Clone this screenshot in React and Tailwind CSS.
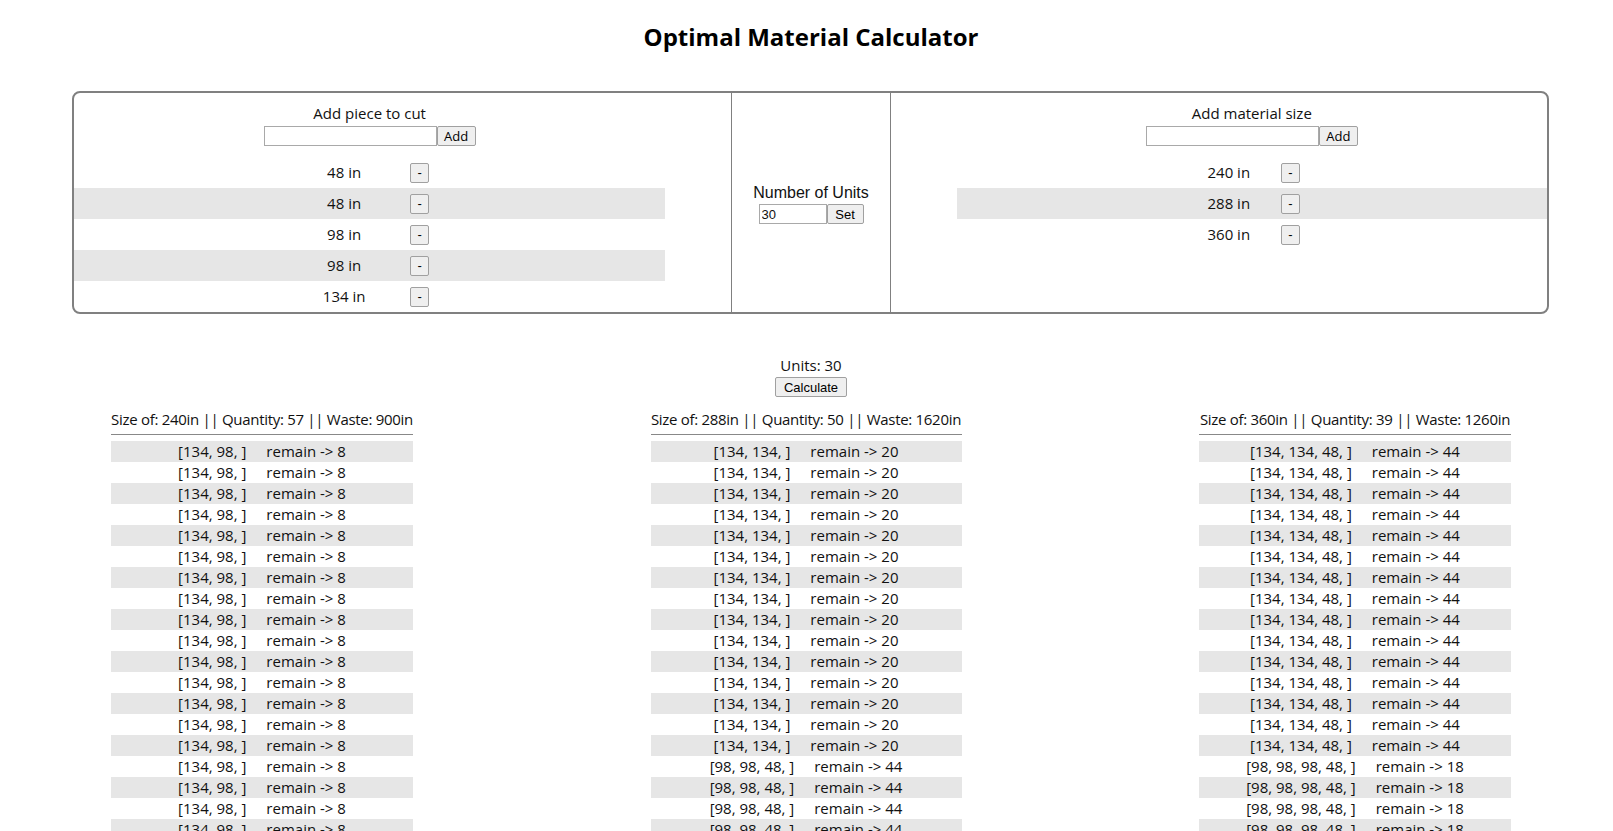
import React, { useState } from 'react';

const pieces = [48, 48, 98, 98, 134];
const materials = [240, 288, 360];

const results = [
  { size: 240, qty: 57, waste: 900, width: 'w-[302px]', groups: [{ cut: '[134, 98, ]', remain: 8, count: 57 }] },
  {
    size: 288, qty: 50, waste: 1620, width: 'w-[311px]',
    groups: [
      { cut: '[134, 134, ]', remain: 20, count: 15 },
      { cut: '[98, 98, 48, ]', remain: 44, count: 35 },
    ],
  },
  {
    size: 360, qty: 39, waste: 1260, width: 'w-[312px]',
    groups: [
      { cut: '[134, 134, 48, ]', remain: 44, count: 15 },
      { cut: '[98, 98, 98, 48, ]', remain: 18, count: 24 },
    ],
  },
];

const btn = 'bg-[#efefef] border border-[#a0a0a0] rounded-[2px] text-[13px] text-black leading-none';

const SizeList = ({ label, items, textWidth, gap }) => (
  <div className="w-[90%]">
    <div className="pt-[10px] text-center leading-[21px]">{label}</div>
    <div className="mt-[2px] flex justify-center">
      <input type="text" className="w-[173px] h-[20px] border border-[#a9a9a9] bg-white px-[2px] text-[13px] outline-none" />
      <button className={`${btn} w-[39px] h-[20px] font-['Open_Sans',sans-serif]`}>Add</button>
    </div>
    <div className="mt-[11px]">
      {items.map((size, idx) => (
        <div
          key={idx}
          className={`h-[31px] flex items-center justify-center ${idx % 2 === 1 ? 'bg-[#e6e6e6]' : ''}`}
        >
          <span className="text-center whitespace-nowrap" style={{ width: textWidth }}>{size} in</span>
          <button className={`${btn} w-[19px] h-[20px] font-['Liberation_Sans',Arial,sans-serif]`} style={{ marginLeft: gap }}>-</button>
        </div>
      ))}
    </div>
  </div>
);

const ResultColumn = ({ result }) => {
  const rows = result.groups.flatMap((g) => Array.from({ length: g.count }, () => g));
  return (
    <div className={result.width}>
      <div className="leading-[21px] pb-[4px] border-b border-[#888] text-center whitespace-nowrap tracking-[-0.3px]">
        Size of: {result.size}in || Quantity: {result.qty} || Waste: {result.waste}in
      </div>
      <div className="mt-[6px]">
        {rows.map((r, idx) => (
          <div
            key={idx}
            className={`h-[21px] leading-[21px] text-center whitespace-nowrap ${idx % 2 === 0 ? 'bg-[#e6e6e6]' : ''}`}
          >
            {r.cut}
            <span className="ml-[20px]">remain -&gt; {r.remain}</span>
          </div>
        ))}
      </div>
    </div>
  );
};

export default function App() {
  const [units, setUnits] = useState('30');

  return (
    <div className="h-[831px] overflow-hidden bg-white text-[#111] font-['Open_Sans',sans-serif] text-[15px]">
      <div className="pl-[9px]">
        <h1 className="mt-[21px] text-center text-[24px] leading-[32px] font-bold text-black">
          Optimal Material Calculator
        </h1>

        {/* inputs panel */}
        <div className="mt-[38px] ml-[63px] w-[1477px] flex border-2 border-[#808080] rounded-[8px]">
          <div className="w-[658px] border-r border-[#808080] flex justify-start">
            <SizeList label="Add piece to cut" items={pieces} textWidth={68} gap={32} />
          </div>
          <div className="w-[159px] border-r border-[#808080] flex flex-col items-center justify-center font-['Liberation_Sans',Arial,sans-serif]">
            <div className="pt-[3px] text-[16px] leading-[18px]">Number of Units</div>
            <div className="mt-[2px] flex">
              <input
                type="text"
                value={units}
                onChange={(e) => setUnits(e.target.value)}
                className="w-[68px] h-[20px] border border-[#a9a9a9] bg-white px-[2px] text-[13px] outline-none"
              />
              <button className={`${btn} w-[37px] h-[20px]`}>Set</button>
            </div>
          </div>
          <div className="flex-1 flex justify-end">
            <SizeList label="Add material size" items={materials} textWidth={50} gap={27} />
          </div>
        </div>

        {/* results */}
        <div className="mt-[41px] text-center leading-[21px]">Units: {units}</div>
        <div className="mt-[1px] flex justify-center">
          <button className={`${btn} w-[72px] h-[20px] font-['Liberation_Sans',Arial,sans-serif]`}>Calculate</button>
        </div>

        <div className="mt-[12px] mx-auto w-[1400px] flex justify-between items-start">
          {results.map((r) => (
            <ResultColumn key={r.size} result={r} />
          ))}
        </div>
      </div>
    </div>
  );
}
